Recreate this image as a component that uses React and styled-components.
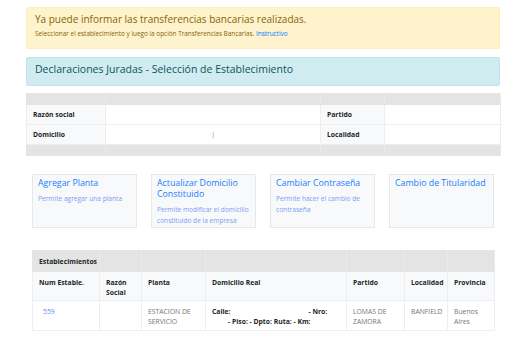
import React from "react";
import styled, { createGlobalStyle } from "styled-components";

const Global = createGlobalStyle`
  html, body { margin: 0; padding: 0; background: #fff; }
  body { font-family: "Open Sans", "Noto Sans", Arial, sans-serif; color: #212529; }
  * { box-sizing: border-box; }
`;

const Page = styled.div`
  width: 512px;
  padding: 7px 12px 0 26px;
  display: flex;
  flex-direction: column;
`;

const Alert = styled.div`
  border-radius: 2px;
  border: 1px solid ${(p) => (p.$variant === "warning" ? "#ffeeba" : "#bee5eb")};
  background: ${(p) => (p.$variant === "warning" ? "#fff3cd" : "#d1ecf1")};
  color: ${(p) => (p.$variant === "warning" ? "#856404" : "#0c5460")};
  padding: ${(p) => (p.$variant === "warning" ? "4px 8px 10px" : "4px 8px 9px")};
  margin-bottom: ${(p) => (p.$variant === "warning" ? "8px" : "7px")};
`;

const AlertTitle = styled.div`
  font-size: ${(p) => p.$size || 10}px;
  line-height: 14px;
`;

const AlertText = styled.div`
  font-size: 6.4px;
  line-height: 9px;
  margin-top: 3px;
  a { color: #007bff; text-decoration: none; }
`;

const InfoTable = styled.table`
  width: 474px;
  border-collapse: collapse;
  table-layout: fixed;
  font-size: 6.8px;
  td { border: 1px solid #eceef1; padding: 0 6px; }
`;

const BarRow = styled.tr`
  height: 11px;
  td { background: #e4e4e4; border-color: #e4e4e4; border-right-color: #eaeaea; }
`;

const DataRow = styled.tr`
  height: 20px;
`;

const Label = styled.td`
  background: #f8f9fb;
  font-weight: 700;
`;

const Value = styled.td`
  background: #fff;
  text-align: center;
  color: #999;
`;

const Cards = styled.div`
  display: grid;
  grid-template-columns: repeat(4, 105px);
  column-gap: 14px;
  padding: 0 6px;
  margin-top: 18px;
`;

const Card = styled.div`
  height: 54px;
  background: #f8f9fa;
  border: 1px solid #e6e7e9;
  padding: 2px 5px;
`;

const CardTitle = styled.div`
  color: #1a7cff;
  font-size: 8.8px;
  line-height: 11px;
  margin-top: 1px;
`;

const CardText = styled.div`
  color: #7b9df5;
  font-size: 6.6px;
  line-height: 10.5px;
  margin-top: 5px;
`;

const Estab = styled.table`
  margin: 22px 6px 0;
  width: 462px;
  border-collapse: collapse;
  table-layout: fixed;
  font-size: 6.8px;
  th, td { border: 1px solid #eceef1; vertical-align: top; text-align: left; }
`;

const CaptionRow = styled.tr`
  height: 21px;
  th { background: #e4e4e4; border-color: #e4e4e4; border-right-color: #eaeaea; vertical-align: middle; padding: 0 6px; font-weight: 700; white-space: nowrap; overflow: visible; }
`;

const HeadRow = styled.tr`
  height: 29px;
  th { background: #f8f9fa; font-weight: 700; padding: 6px 3px 0 6px; line-height: 9.5px; }
`;

const BodyRow = styled.tr`
  height: 30px;
  td { background: #fff; color: #777; padding: 6px 3px 0 6px; line-height: 9.5px; font-weight: 400; }
`;

const NumLink = styled.a`
  color: #5b8cf0;
  text-decoration: none;
  padding-left: 4px;
`;

const Addr = styled.td`
  && { color: #212529; }
  b { font-weight: 700; }
`;

const Blank = styled.span`
  display: inline-block;
  width: ${(p) => p.$w}px;
`;

const infoCols = [79, 215, 64, 116];
const estabCols = [67, 42, 64, 141, 58, 43, 47];

export default function App() {
  return (
    <>
      <Global />
      <Page>
        <Alert $variant="warning">
          <AlertTitle $size={10}>Ya puede informar las transferencias bancarias realizadas.</AlertTitle>
          <AlertText>
            Seleccionar el establecimiento y luego la opción Transferencias Bancarias. <a href="#">Instructivo</a>
          </AlertText>
        </Alert>
        <Alert $variant="info">
          <AlertTitle $size={10.5}>Declaraciones Juradas - Selección de Establecimiento</AlertTitle>
        </Alert>
        <InfoTable>
          <colgroup>
            {infoCols.map((w, i) => <col key={i} width={w} />)}
          </colgroup>
          <tbody>
            <BarRow><td /><td /><td /><td /></BarRow>
            <DataRow>
              <Label>Razón social</Label>
              <Value></Value>
              <Label>Partido</Label>
              <Value></Value>
            </DataRow>
            <DataRow>
              <Label>Domicilio</Label>
              <Value>)</Value>
              <Label>Localidad</Label>
              <Value></Value>
            </DataRow>
            <BarRow><td /><td /><td /><td /></BarRow>
          </tbody>
        </InfoTable>
        <Cards>
          <Card>
            <CardTitle>Agregar Planta</CardTitle>
            <CardText>Permite agregar una planta</CardText>
          </Card>
          <Card>
            <CardTitle>Actualizar Domicilio Constituido</CardTitle>
            <CardText>Permite modificar el domicilio constituido de la empresa</CardText>
          </Card>
          <Card>
            <CardTitle>Cambiar Contraseña</CardTitle>
            <CardText>Permite hacer el cambio de contraseña</CardText>
          </Card>
          <Card>
            <CardTitle>Cambio de Titularidad</CardTitle>
          </Card>
        </Cards>
        <Estab>
          <colgroup>
            {estabCols.map((w, i) => <col key={i} width={w} />)}
          </colgroup>
          <thead>
            <CaptionRow>
              <th>Establecimientos</th><th /><th /><th /><th /><th /><th />
            </CaptionRow>
            <HeadRow>
              <th>Num Estable.</th>
              <th>Razón Social</th>
              <th>Planta</th>
              <th>Domicilio Real</th>
              <th>Partido</th>
              <th>Localidad</th>
              <th>Provincia</th>
            </HeadRow>
          </thead>
          <tbody>
            <BodyRow>
              <td><NumLink href="#">559</NumLink></td>
              <td></td>
              <td>ESTACION DE SERVICIO</td>
              <Addr>
                <b>Calle:</b><Blank $w={78} /><b>- Nro:</b><br />
                <Blank $w={16} /><b>- Piso: - Dpto: Ruta: - Km:</b>
              </Addr>
              <td>LOMAS DE ZAMORA</td>
              <td>BANFIELD</td>
              <td>Buenos Aires</td>
            </BodyRow>
          </tbody>
        </Estab>
      </Page>
    </>
  );
}
